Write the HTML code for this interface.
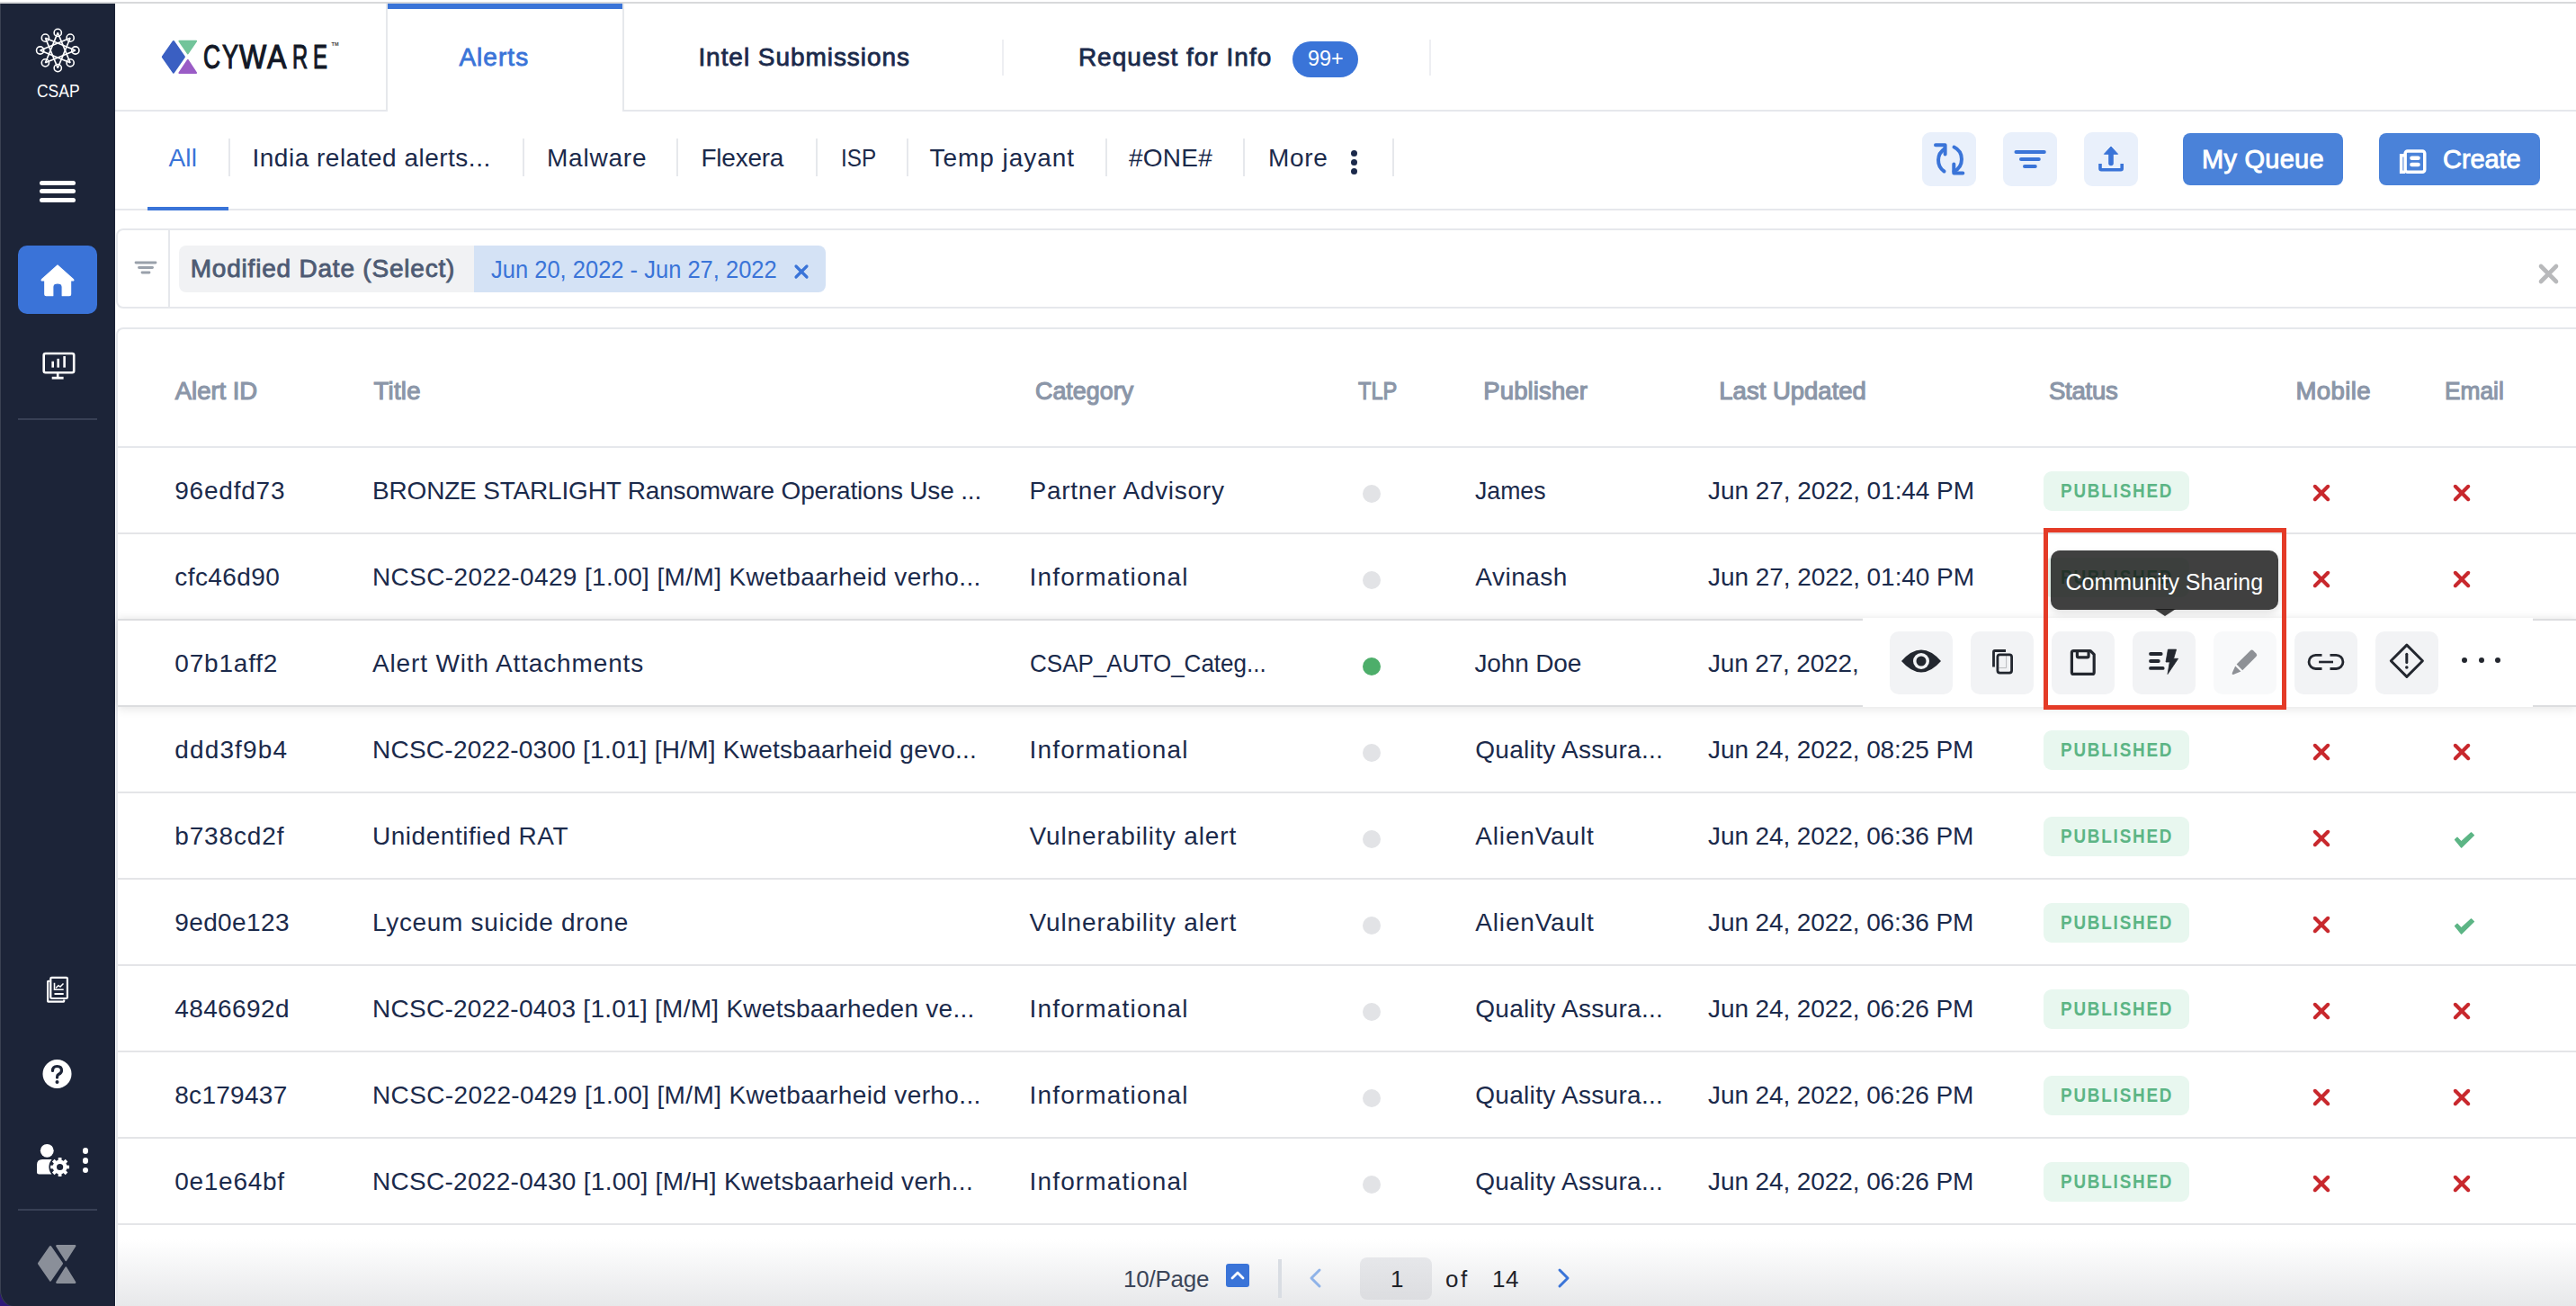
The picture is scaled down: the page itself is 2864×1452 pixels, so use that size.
<!DOCTYPE html>
<html><head><meta charset="utf-8"><style>
html,body{margin:0;padding:0}
body{width:2864px;height:1452px;overflow:hidden;position:relative;background:#fff;font-family:"Liberation Sans",sans-serif}
.t{position:absolute;white-space:nowrap;line-height:1}
svg{overflow:visible}
</style></head><body>
<div style="position:absolute;left:0px;top:2px;width:2864px;height:2px;background:#d8d9db"></div>
<div style="position:absolute;left:0px;top:1430px;width:20px;height:22px;background:#2e1878"></div>
<div style="position:absolute;left:0px;top:4px;width:128px;height:1448px;background:#1c2438;border-bottom-left-radius:14px 18px;box-shadow:inset 1px 0 0 #3a4152"></div>
<svg style="position:absolute;left:20px;top:30px" width="90" height="54" viewBox="0 0 90 54"><g stroke="#fff" stroke-width="1.6" fill="none"><line x1="44.25" y1="6.40" x2="58.11" y2="39.86" /><line x1="58.11" y1="12.14" x2="44.25" y2="45.60" /><line x1="63.85" y1="26.00" x2="30.39" y2="39.86" /><line x1="58.11" y1="39.86" x2="24.65" y2="26.00" /><line x1="44.25" y1="45.60" x2="30.39" y2="12.14" /><line x1="30.39" y1="39.86" x2="44.25" y2="6.40" /><line x1="24.65" y1="26.00" x2="58.11" y2="12.14" /><line x1="30.39" y1="12.14" x2="63.85" y2="26.00" /><circle cx="44.25" cy="6.40" r="4.1" fill="none"/><circle cx="58.11" cy="12.14" r="4.1" fill="none"/><circle cx="63.85" cy="26.00" r="4.1" fill="none"/><circle cx="58.11" cy="39.86" r="4.1" fill="none"/><circle cx="44.25" cy="45.60" r="4.1" fill="none"/><circle cx="30.39" cy="39.86" r="4.1" fill="none"/><circle cx="24.65" cy="26.00" r="4.1" fill="none"/><circle cx="30.39" cy="12.14" r="4.1" fill="none"/></g></svg>
<div class="t" style="left:41.0px;top:90.8px;font-size:20px;color:#fff;font-weight:400;letter-spacing:0px;transform:scaleX(0.8741);transform-origin:0 0;">CSAP</div>
<div style="position:absolute;left:44px;top:200.5px;width:40px;height:5px;background:#fff;border-radius:3px"></div>
<div style="position:absolute;left:44px;top:210.2px;width:40px;height:5px;background:#fff;border-radius:3px"></div>
<div style="position:absolute;left:44px;top:220.0px;width:40px;height:5px;background:#fff;border-radius:3px"></div>
<div style="position:absolute;left:20px;top:273px;width:88px;height:76px;background:#3a73d8;border-radius:10px"></div>
<svg style="position:absolute;left:44px;top:293px" width="40" height="38" viewBox="0 0 40 38"><path d="M20 2 L37.6 17.8 Q38.4 19 37 19 L34.6 19 L34.6 34.2 Q34.6 35.7 33.1 35.7 L25.2 35.7 L25.2 26 Q25.2 22 20 22 Q14.8 22 14.8 26 L14.8 35.7 L7.3 35.7 Q5.8 35.7 5.8 34.2 L5.8 19 L3 19 Q1.6 19 2.4 17.8 Z" fill="#fff" stroke="#fff" stroke-width="1.2" stroke-linejoin="round"/></svg>
<svg style="position:absolute;left:45px;top:390px" width="40" height="34" viewBox="0 0 40 34"><g fill="none" stroke="#fff" stroke-width="2.6"><rect x="3.7" y="3" width="33.5" height="21.3" rx="2"/><line x1="19.2" y1="24.3" x2="19.2" y2="30"/><line x1="12.7" y1="30.2" x2="25.6" y2="30.2" stroke-width="2.8"/></g><g stroke="#fff" stroke-width="2.6"><line x1="13.7" y1="18.6" x2="13.7" y2="11.7"/><line x1="19.7" y1="18.6" x2="19.7" y2="8.8"/><line x1="26.6" y1="18.6" x2="26.6" y2="6"/></g></svg>
<div style="position:absolute;left:20px;top:465px;width:88px;height:2px;background:#384055"></div>
<svg style="position:absolute;left:48px;top:1083px" width="32" height="36" viewBox="0 0 32 36"><g fill="none" stroke="#fff" stroke-width="2.2"><path d="M7.3 7.8 L5.6 7.8 Q5.1 7.8 5.1 8.3 L5.1 30.1 Q5.1 30.6 5.6 30.6 L22.7 30.6 Q23.2 30.6 23.2 30.1 L23.2 28.6"/><rect x="8.3" y="3.8" width="18.6" height="23.2" rx="1.2" fill="#1c2438"/><path d="M12.5 9.7 L12.5 17.2 L22.7 17.2" stroke-width="1.6"/><path d="M14 15.5 L17 12.6 L19 14 L22.5 10.5" stroke-width="1.5"/><line x1="12.5" y1="22" x2="22.7" y2="22" stroke-width="2"/></g></svg>
<svg style="position:absolute;left:46px;top:1177px" width="36" height="34" viewBox="0 0 36 34"><circle cx="17.5" cy="17" r="16" fill="#fff"/><path d="M12.5 13.5 Q12.5 8.5 17.5 8.5 Q22.5 8.5 22.5 13 Q22.5 16 19 17.5 Q17.5 18.3 17.5 21" fill="none" stroke="#1c2438" stroke-width="3.2" stroke-linecap="round"/><circle cx="17.5" cy="26" r="2" fill="#1c2438"/></svg>
<svg style="position:absolute;left:38px;top:1270px" width="44" height="40" viewBox="0 0 44 40"><circle cx="14.3" cy="9.3" r="7.4" fill="#fff"/><path d="M3 35.5 L3 25 Q3 19 9 19 L19.6 19 L19.6 35.5 L5.5 35.5 Q3 35.5 3 33 Z" fill="#fff"/><circle cx="28.6" cy="27.5" r="12.2" fill="#1c2438"/><path d="M35.92 25.47 L39.04 25.68 L39.04 29.32 L35.92 29.53 L35.21 31.25 L37.27 33.60 L34.70 36.17 L32.35 34.11 L30.63 34.82 L30.42 37.94 L26.78 37.94 L26.57 34.82 L24.85 34.11 L22.50 36.17 L19.93 33.60 L21.99 31.25 L21.28 29.53 L18.16 29.32 L18.16 25.68 L21.28 25.47 L21.99 23.75 L19.93 21.40 L22.50 18.83 L24.85 20.89 L26.57 20.18 L26.78 17.06 L30.42 17.06 L30.63 20.18 L32.35 20.89 L34.70 18.83 L37.27 21.40 L35.21 23.75 Z" fill="#fff"/><circle cx="28.6" cy="27.5" r="7.8" fill="#fff"/><circle cx="28.6" cy="27.5" r="3.6" fill="#1c2438"/></svg>
<div style="position:absolute;left:91.5px;top:1276.3px;width:6.5px;height:6.5px;background:#fff;border-radius:50%"></div>
<div style="position:absolute;left:91.5px;top:1287px;width:6.5px;height:6.5px;background:#fff;border-radius:50%"></div>
<div style="position:absolute;left:91.5px;top:1297.7px;width:6.5px;height:6.5px;background:#fff;border-radius:50%"></div>
<div style="position:absolute;left:20px;top:1344px;width:88px;height:2px;background:#384055"></div>
<svg style="position:absolute;left:40px;top:1383px" width="46" height="46" viewBox="0 0 46 46"><g fill="#8a8f99" stroke="#8a8f99" stroke-linejoin="round"><path d="M3.2 21.8 L16 3.2 L28.8 21.8 L16 40.4 Z" stroke-width="2.4"/><path d="M23.2 2.2 L43.3 2.2 L33.3 18 Z" stroke-width="2.2"/><path d="M33.3 26.5 L43.3 42.8 L23.2 42.8 Z" stroke-width="2.2"/></g></svg>
<div style="position:absolute;left:128px;top:122px;width:301px;height:2px;background:#e6e8ec"></div>
<div style="position:absolute;left:429px;top:4px;width:2px;height:120px;background:#e6e8ec"></div>
<div style="position:absolute;left:692px;top:4px;width:2px;height:120px;background:#e6e8ec"></div>
<div style="position:absolute;left:431px;top:4px;width:261px;height:6px;background:#3a74d8"></div>
<div style="position:absolute;left:694px;top:122px;width:2170px;height:2px;background:#e6e8ec"></div>
<div style="position:absolute;left:1114px;top:44px;width:2px;height:40px;background:#eeeff2"></div>
<div style="position:absolute;left:1589px;top:44px;width:2px;height:40px;background:#eeeff2"></div>
<svg style="position:absolute;left:178px;top:43px" width="44" height="42" viewBox="0 0 44 42"><path d="M3 20.3 L14.9 3.2 L26.7 20.3 L14.9 37.4 Z" fill="#3a5fc2" stroke="#3a5fc2" stroke-width="2.4" stroke-linejoin="round"/><path d="M21.3 2.75 L40.2 2.75 L30.8 16.6 Z" fill="#72c49a" stroke="#72c49a" stroke-width="1.8" stroke-linejoin="round"/><path d="M30.8 23.8 L40.2 38 L21.3 38 Z" fill="#9a5cc6" stroke="#9a5cc6" stroke-width="1.8" stroke-linejoin="round"/></svg>
<div class="t" style="left:226.4px;top:45.0px;font-size:37px;color:#121826;font-weight:400;letter-spacing:0px;-webkit-text-stroke:1.2px #121826;transform:scaleX(0.7093);transform-origin:0 0;">C</div>
<div class="t" style="left:246.5px;top:45.0px;font-size:37px;color:#121826;font-weight:400;letter-spacing:0px;-webkit-text-stroke:1.2px #121826;transform:scaleX(0.7300);transform-origin:0 0;">Y</div>
<div class="t" style="left:265.7px;top:45.0px;font-size:37px;color:#121826;font-weight:400;letter-spacing:0px;-webkit-text-stroke:1.2px #121826;transform:scaleX(0.8643);transform-origin:0 0;">W</div>
<div class="t" style="left:297.2px;top:45.0px;font-size:37px;color:#121826;font-weight:400;letter-spacing:0px;-webkit-text-stroke:1.2px #121826;transform:scaleX(0.8700);transform-origin:0 0;">A</div>
<div class="t" style="left:324.6px;top:45.0px;font-size:37px;color:#121826;font-weight:400;letter-spacing:0px;-webkit-text-stroke:1.2px #121826;transform:scaleX(0.6426);transform-origin:0 0;">R</div>
<div class="t" style="left:348.1px;top:45.0px;font-size:37px;color:#121826;font-weight:400;letter-spacing:0px;-webkit-text-stroke:1.2px #121826;transform:scaleX(0.6460);transform-origin:0 0;">E</div>
<div class="t" style="left:368.5px;top:46.8px;font-size:5.5px;color:#444;font-weight:700;letter-spacing:0.2px;">TM</div>
<div class="t" style="left:510.4px;top:50.1px;font-size:28px;color:#3a74d8;font-weight:400;letter-spacing:1.04px;-webkit-text-stroke:0.8px #3a74d8;">Alerts</div>
<div class="t" style="left:776.4px;top:50.1px;font-size:28px;color:#1b2a4b;font-weight:400;letter-spacing:0.95px;-webkit-text-stroke:0.8px #1b2a4b;">Intel Submissions</div>
<div class="t" style="left:1198.9px;top:50.1px;font-size:28px;color:#1b2a4b;font-weight:400;letter-spacing:1.013px;-webkit-text-stroke:0.8px #1b2a4b;">Request for Info</div>
<div style="position:absolute;left:1437px;top:46px;width:73px;height:40px;background:#3a74d8;border-radius:20px"></div>
<div class="t" style="left:1453.5px;top:53.4px;font-size:24px;color:#fff;font-weight:400;letter-spacing:0px;transform:scaleX(0.9756);transform-origin:0 0;">99+</div>
<div style="position:absolute;left:128px;top:232px;width:2736px;height:2px;background:#e6e8ec"></div>
<div style="position:absolute;left:164px;top:230px;width:90px;height:4px;background:#3a74d8"></div>
<div style="position:absolute;left:254px;top:154px;width:2px;height:42px;background:#e6e8ec"></div>
<div style="position:absolute;left:581px;top:154px;width:2px;height:42px;background:#e6e8ec"></div>
<div style="position:absolute;left:752px;top:154px;width:2px;height:42px;background:#e6e8ec"></div>
<div style="position:absolute;left:907px;top:154px;width:2px;height:42px;background:#e6e8ec"></div>
<div style="position:absolute;left:1008px;top:154px;width:2px;height:42px;background:#e6e8ec"></div>
<div style="position:absolute;left:1229px;top:154px;width:2px;height:42px;background:#e6e8ec"></div>
<div style="position:absolute;left:1382px;top:154px;width:2px;height:42px;background:#e6e8ec"></div>
<div style="position:absolute;left:1548px;top:154px;width:2px;height:42px;background:#e6e8ec"></div>
<div class="t" style="left:187.5px;top:162.3px;font-size:28px;color:#3a74d8;font-weight:400;letter-spacing:0.125px;">All</div>
<div class="t" style="left:280.5px;top:162.3px;font-size:28px;color:#1b2a4b;font-weight:400;letter-spacing:0.5px;">India related alerts...</div>
<div class="t" style="left:608px;top:162.3px;font-size:28px;color:#1b2a4b;font-weight:400;letter-spacing:0.792px;">Malware</div>
<div class="t" style="left:779.5px;top:162.3px;font-size:28px;color:#1b2a4b;font-weight:400;letter-spacing:-0.25px;">Flexera</div>
<div class="t" style="left:934.5px;top:162.3px;font-size:28px;color:#1b2a4b;font-weight:400;letter-spacing:0px;transform:scaleX(0.8667);transform-origin:0 0;">ISP</div>
<div class="t" style="left:1033.5px;top:162.3px;font-size:28px;color:#1b2a4b;font-weight:400;letter-spacing:0.95px;">Temp jayant</div>
<div class="t" style="left:1255px;top:162.3px;font-size:28px;color:#1b2a4b;font-weight:400;letter-spacing:0.25px;">#ONE#</div>
<div class="t" style="left:1410px;top:162.3px;font-size:28px;color:#1b2a4b;font-weight:400;letter-spacing:0.667px;">More</div>
<div style="position:absolute;left:1502px;top:166.5px;width:7px;height:7px;background:#1b2a4b;border-radius:50%"></div>
<div style="position:absolute;left:1502px;top:176.5px;width:7px;height:7px;background:#1b2a4b;border-radius:50%"></div>
<div style="position:absolute;left:1502px;top:186.5px;width:7px;height:7px;background:#1b2a4b;border-radius:50%"></div>
<div style="position:absolute;left:2137px;top:147px;width:60px;height:60px;background:#e9f0fb;border-radius:9px"></div>
<div style="position:absolute;left:2227px;top:147px;width:60px;height:60px;background:#e9f0fb;border-radius:9px"></div>
<div style="position:absolute;left:2317px;top:147px;width:60px;height:60px;background:#e9f0fb;border-radius:9px"></div>
<svg style="position:absolute;left:2137px;top:147px" width="60" height="60" viewBox="0 0 60 60"><g fill="none" stroke="#3a74d8" stroke-width="4" stroke-linecap="round" stroke-linejoin="round"><path d="M25 18.5 A15 15 0 0 0 24.5 43.5"/><path d="M35.5 16.5 A15 15 0 0 1 35.5 43.5"/><path d="M15 14.3 L25.6 14.3 L25.6 24.5"/><path d="M35.3 35.5 L35.3 45.5 L45.3 45.5"/></g></svg>
<svg style="position:absolute;left:2227px;top:147px" width="60" height="60" viewBox="0 0 60 60"><g stroke="#3a74d8" stroke-width="4" stroke-linecap="round"><line x1="14.5" y1="22" x2="45.8" y2="22"/><line x1="20" y1="30" x2="39.8" y2="30"/><line x1="24" y1="38" x2="35.8" y2="38"/></g></svg>
<svg style="position:absolute;left:2317px;top:147px" width="60" height="60" viewBox="0 0 60 60"><path d="M30 16 L37.6 24.3 L22.4 24.3 Z" fill="#3a74d8" stroke="#3a74d8" stroke-width="1" stroke-linejoin="round"/><path d="M30 23 L30 34.5" stroke="#3a74d8" stroke-width="5.6" stroke-linecap="round"/><path d="M18 35 L18 40.5 Q18 41.7 19.2 41.7 L41 41.7 Q42.2 41.7 42.2 40.5 L42.2 35" fill="none" stroke="#3a74d8" stroke-width="3.6"/></svg>
<div style="position:absolute;left:2427px;top:148px;width:178px;height:58px;background:#4a82d9;border-radius:8px"></div>
<div class="t" style="left:2448.1px;top:163.3px;font-size:29px;color:#fff;font-weight:400;letter-spacing:0.243px;-webkit-text-stroke:0.9px #fff;">My Queue</div>
<div style="position:absolute;left:2645px;top:148px;width:179px;height:58px;background:#4a82d9;border-radius:8px"></div>
<svg style="position:absolute;left:2665px;top:163px" width="34" height="32" viewBox="0 0 34 32"><g fill="none" stroke="#fff" stroke-width="3.5"><rect x="9.15" y="4.95" width="21.6" height="23.3" rx="2.5"/><path d="M9 9.75 L4.65 9.75 L4.65 28.25 L9 28.25"/></g><g stroke="#fff" stroke-width="4.6" stroke-linecap="round"><line x1="16.5" y1="12.75" x2="23.5" y2="12.75"/><line x1="16.5" y1="19.95" x2="23.5" y2="19.95"/></g></svg>
<div class="t" style="left:2716px;top:163.3px;font-size:29px;color:#fff;font-weight:400;letter-spacing:-0.06px;-webkit-text-stroke:0.9px #fff;">Create</div>
<div style="position:absolute;left:129px;top:254px;width:2760px;height:89px;border:2px solid #e6e8ec;border-radius:8px;box-sizing:border-box"></div>
<div style="position:absolute;left:187px;top:256px;width:2px;height:85px;background:#e6e8ec"></div>
<svg style="position:absolute;left:148px;top:288px" width="28" height="20" viewBox="0 0 28 20"><g stroke="#9aa1ab" stroke-width="2.8" stroke-linecap="round"><line x1="3" y1="4" x2="25" y2="4"/><line x1="6.5" y1="9.5" x2="21.5" y2="9.5"/><line x1="10" y1="15" x2="18" y2="15"/></g></svg>
<div style="position:absolute;left:199px;top:273px;width:328px;height:52px;background:#f1f2f4;border-radius:8px 0 0 8px"></div>
<div class="t" style="left:211.7px;top:285.1px;font-size:28px;color:#4e5b73;font-weight:400;letter-spacing:0.795px;-webkit-text-stroke:0.85px #4e5b73;">Modified Date (Select)</div>
<div style="position:absolute;left:527px;top:273px;width:391px;height:52px;background:#d4e2f5;border-radius:0 8px 8px 0"></div>
<div class="t" style="left:545.75px;top:286.7px;font-size:27px;color:#3a74d8;font-weight:400;letter-spacing:0px;transform:scaleX(0.9449);transform-origin:0 0;">Jun 20, 2022 - Jun 27, 2022</div>
<svg style="position:absolute;left:880.5px;top:291.5px" width="20" height="20" viewBox="0 0 20 20"><g stroke="#3a74d8" stroke-width="3.2" stroke-linecap="round"><line x1="4" y1="4" x2="16" y2="16"/><line x1="16" y1="4" x2="4" y2="16"/></g></svg>
<svg style="position:absolute;left:2821px;top:292px" width="26" height="26" viewBox="0 0 26 26"><g stroke="#b8b9bb" stroke-width="4.6" stroke-linecap="round"><line x1="4" y1="4" x2="21" y2="21"/><line x1="21" y1="4" x2="4" y2="21"/></g></svg>
<div style="position:absolute;left:129px;top:364px;width:2760px;height:1100px;border-top:2px solid #e6e8ec;border-left:2px solid #e6e8ec;border-radius:8px 0 0 0;box-sizing:border-box"></div>
<div class="t" style="left:194.75px;top:420.8px;font-size:27.5px;color:#8b96a8;font-weight:400;letter-spacing:-0.036px;-webkit-text-stroke:1.15px #8b96a8;">Alert ID</div>
<div class="t" style="left:415.5px;top:420.8px;font-size:27.5px;color:#8b96a8;font-weight:400;letter-spacing:0.25px;-webkit-text-stroke:1.15px #8b96a8;">Title</div>
<div class="t" style="left:1151.25px;top:420.8px;font-size:27.5px;color:#8b96a8;font-weight:400;letter-spacing:0px;-webkit-text-stroke:1.15px #8b96a8;transform:scaleX(0.9777);transform-origin:0 0;">Category</div>
<div class="t" style="left:1510.0px;top:420.8px;font-size:27.5px;color:#8b96a8;font-weight:400;letter-spacing:0px;-webkit-text-stroke:1.15px #8b96a8;transform:scaleX(0.8600);transform-origin:0 0;">TLP</div>
<div class="t" style="left:1649.3px;top:420.8px;font-size:27.5px;color:#8b96a8;font-weight:400;letter-spacing:0.125px;-webkit-text-stroke:1.15px #8b96a8;">Publisher</div>
<div class="t" style="left:1911.3px;top:420.8px;font-size:27.5px;color:#8b96a8;font-weight:400;letter-spacing:0.0px;-webkit-text-stroke:1.15px #8b96a8;">Last Updated</div>
<div class="t" style="left:2277.9px;top:420.8px;font-size:27.5px;color:#8b96a8;font-weight:400;letter-spacing:-0.2px;-webkit-text-stroke:1.15px #8b96a8;">Status</div>
<div class="t" style="left:2552.5px;top:420.8px;font-size:27.5px;color:#8b96a8;font-weight:400;letter-spacing:0.4px;-webkit-text-stroke:1.15px #8b96a8;">Mobile</div>
<div class="t" style="left:2718.2px;top:420.8px;font-size:27.5px;color:#8b96a8;font-weight:400;letter-spacing:0px;-webkit-text-stroke:1.15px #8b96a8;transform:scaleX(0.9565);transform-origin:0 0;">Email</div>
<div style="position:absolute;left:131px;top:496px;width:2733px;height:2px;background:#e6e8ec"></div>
<div class="t" style="left:194.25px;top:532.0px;font-size:28px;color:#1b2a4b;font-weight:400;letter-spacing:0.786px;">96edfd73</div>
<div class="t" style="left:414px;top:532.0px;font-size:28px;color:#1b2a4b;font-weight:400;letter-spacing:-0.178px;">BRONZE STARLIGHT Ransomware Operations Use ...</div>
<div class="t" style="left:1144.5px;top:532.0px;font-size:28px;color:#1b2a4b;font-weight:400;letter-spacing:0.733px;">Partner Advisory</div>
<div style="position:absolute;left:1514.5px;top:538.75px;width:20px;height:20px;background:#e2e3e6;border-radius:50%"></div>
<div class="t" style="left:1639.5px;top:532.0px;font-size:28px;color:#1b2a4b;font-weight:400;letter-spacing:0px;transform:scaleX(0.9512);transform-origin:0 0;">James</div>
<div class="t" style="left:1899px;top:532.0px;font-size:28px;color:#1b2a4b;font-weight:400;letter-spacing:-0.062px;">Jun 27, 2022, 01:44 PM</div>
<div style="position:absolute;left:2272px;top:523.5px;width:162px;height:44.5px;background:#e8f7ef;border-radius:9px"></div>
<div class="t" style="left:2291.2px;top:535.0px;font-size:22.5px;color:#5cb585;font-weight:700;letter-spacing:2.128px;transform:scaleX(0.8400);transform-origin:0 0;">PUBLISHED</div>
<svg style="position:absolute;left:2570px;top:536.6px" width="22" height="22" viewBox="0 0 22 22"><g stroke="#c8282d" stroke-width="4.1" stroke-linecap="round"><line x1="3.8" y1="3.8" x2="18.2" y2="18.2"/><line x1="18.2" y1="3.8" x2="3.8" y2="18.2"/></g></svg>
<svg style="position:absolute;left:2726px;top:536.6px" width="22" height="22" viewBox="0 0 22 22"><g stroke="#c8282d" stroke-width="4.1" stroke-linecap="round"><line x1="3.8" y1="3.8" x2="18.2" y2="18.2"/><line x1="18.2" y1="3.8" x2="3.8" y2="18.2"/></g></svg>
<div style="position:absolute;left:131px;top:592px;width:2733px;height:2px;background:#e4e5e8"></div>
<div class="t" style="left:194.25px;top:628.0px;font-size:28px;color:#1b2a4b;font-weight:400;letter-spacing:0.429px;">cfc46d90</div>
<div class="t" style="left:414px;top:628.0px;font-size:28px;color:#1b2a4b;font-weight:400;letter-spacing:0.375px;">NCSC-2022-0429 [1.00] [M/M] Kwetbaarheid verho...</div>
<div class="t" style="left:1144.5px;top:628.0px;font-size:28px;color:#1b2a4b;font-weight:400;letter-spacing:1.167px;">Informational</div>
<div style="position:absolute;left:1514.5px;top:634.75px;width:20px;height:20px;background:#e2e3e6;border-radius:50%"></div>
<div class="t" style="left:1640.3px;top:628.0px;font-size:28px;color:#1b2a4b;font-weight:400;letter-spacing:0.5px;">Avinash</div>
<div class="t" style="left:1899px;top:628.0px;font-size:28px;color:#1b2a4b;font-weight:400;letter-spacing:-0.062px;">Jun 27, 2022, 01:40 PM</div>
<div style="position:absolute;left:2272px;top:619.5px;width:162px;height:44.5px;background:#e8f7ef;border-radius:9px"></div>
<div class="t" style="left:2291.2px;top:631.0px;font-size:22.5px;color:#5cb585;font-weight:700;letter-spacing:2.128px;transform:scaleX(0.8400);transform-origin:0 0;">PUBLISHED</div>
<svg style="position:absolute;left:2570px;top:632.6px" width="22" height="22" viewBox="0 0 22 22"><g stroke="#c8282d" stroke-width="4.1" stroke-linecap="round"><line x1="3.8" y1="3.8" x2="18.2" y2="18.2"/><line x1="18.2" y1="3.8" x2="3.8" y2="18.2"/></g></svg>
<svg style="position:absolute;left:2726px;top:632.6px" width="22" height="22" viewBox="0 0 22 22"><g stroke="#c8282d" stroke-width="4.1" stroke-linecap="round"><line x1="3.8" y1="3.8" x2="18.2" y2="18.2"/><line x1="18.2" y1="3.8" x2="3.8" y2="18.2"/></g></svg>
<div style="position:absolute;left:131px;top:688px;width:2733px;height:2px;background:#dcdddf"></div>
<div style="position:absolute;left:131px;top:688px;width:2733px;height:97px;background:#fff;box-shadow:0 4px 10px rgba(0,0,0,0.09), 0 -3px 8px rgba(0,0,0,0.05)"></div>
<div style="position:absolute;left:131px;top:688px;width:2733px;height:2px;background:#dcdddf"></div>
<div class="t" style="left:194.25px;top:724.0px;font-size:28px;color:#1b2a4b;font-weight:400;letter-spacing:0.814px;">07b1aff2</div>
<div class="t" style="left:414px;top:724.0px;font-size:28px;color:#1b2a4b;font-weight:400;letter-spacing:0.857px;">Alert With Attachments</div>
<div class="t" style="left:1144.5px;top:724.0px;font-size:28px;color:#1b2a4b;font-weight:400;letter-spacing:0px;transform:scaleX(0.9293);transform-origin:0 0;">CSAP_AUTO_Categ...</div>
<div style="position:absolute;left:1514.5px;top:730.75px;width:20px;height:20px;background:#4dae6a;border-radius:50%"></div>
<div class="t" style="left:1639.5px;top:724.0px;font-size:28px;color:#1b2a4b;font-weight:400;letter-spacing:-0.143px;">John Doe</div>
<div class="t" style="left:1899px;top:724.0px;font-size:28px;color:#1b2a4b;font-weight:400;letter-spacing:-0.167px;">Jun 27, 2022,</div>
<div style="position:absolute;left:131px;top:784px;width:2733px;height:2px;background:#dcdddf"></div>
<div class="t" style="left:194.25px;top:820.0px;font-size:28px;color:#1b2a4b;font-weight:400;letter-spacing:1.143px;">ddd3f9b4</div>
<div class="t" style="left:414px;top:820.0px;font-size:28px;color:#1b2a4b;font-weight:400;letter-spacing:0.25px;">NCSC-2022-0300 [1.01] [H/M] Kwetsbaarheid gevo...</div>
<div class="t" style="left:1144.5px;top:820.0px;font-size:28px;color:#1b2a4b;font-weight:400;letter-spacing:1.167px;">Informational</div>
<div style="position:absolute;left:1514.5px;top:826.75px;width:20px;height:20px;background:#e2e3e6;border-radius:50%"></div>
<div class="t" style="left:1640.3px;top:820.0px;font-size:28px;color:#1b2a4b;font-weight:400;letter-spacing:0.294px;">Quality Assura...</div>
<div class="t" style="left:1899px;top:820.0px;font-size:28px;color:#1b2a4b;font-weight:400;letter-spacing:-0.095px;">Jun 24, 2022, 08:25 PM</div>
<div style="position:absolute;left:2272px;top:811.5px;width:162px;height:44.5px;background:#e8f7ef;border-radius:9px"></div>
<div class="t" style="left:2291.2px;top:823.0px;font-size:22.5px;color:#5cb585;font-weight:700;letter-spacing:2.128px;transform:scaleX(0.8400);transform-origin:0 0;">PUBLISHED</div>
<svg style="position:absolute;left:2570px;top:824.6px" width="22" height="22" viewBox="0 0 22 22"><g stroke="#c8282d" stroke-width="4.1" stroke-linecap="round"><line x1="3.8" y1="3.8" x2="18.2" y2="18.2"/><line x1="18.2" y1="3.8" x2="3.8" y2="18.2"/></g></svg>
<svg style="position:absolute;left:2726px;top:824.6px" width="22" height="22" viewBox="0 0 22 22"><g stroke="#c8282d" stroke-width="4.1" stroke-linecap="round"><line x1="3.8" y1="3.8" x2="18.2" y2="18.2"/><line x1="18.2" y1="3.8" x2="3.8" y2="18.2"/></g></svg>
<div style="position:absolute;left:131px;top:880px;width:2733px;height:2px;background:#e4e5e8"></div>
<div class="t" style="left:194.25px;top:916.0px;font-size:28px;color:#1b2a4b;font-weight:400;letter-spacing:0.857px;">b738cd2f</div>
<div class="t" style="left:414px;top:916.0px;font-size:28px;color:#1b2a4b;font-weight:400;letter-spacing:0.533px;">Unidentified RAT</div>
<div class="t" style="left:1144.5px;top:916.0px;font-size:28px;color:#1b2a4b;font-weight:400;letter-spacing:0.889px;">Vulnerability alert</div>
<div style="position:absolute;left:1514.5px;top:922.75px;width:20px;height:20px;background:#e2e3e6;border-radius:50%"></div>
<div class="t" style="left:1640.3px;top:916.0px;font-size:28px;color:#1b2a4b;font-weight:400;letter-spacing:0.822px;">AlienVault</div>
<div class="t" style="left:1899px;top:916.0px;font-size:28px;color:#1b2a4b;font-weight:400;letter-spacing:-0.095px;">Jun 24, 2022, 06:36 PM</div>
<div style="position:absolute;left:2272px;top:907.5px;width:162px;height:44.5px;background:#e8f7ef;border-radius:9px"></div>
<div class="t" style="left:2291.2px;top:919.0px;font-size:22.5px;color:#5cb585;font-weight:700;letter-spacing:2.128px;transform:scaleX(0.8400);transform-origin:0 0;">PUBLISHED</div>
<svg style="position:absolute;left:2570px;top:920.6px" width="22" height="22" viewBox="0 0 22 22"><g stroke="#c8282d" stroke-width="4.1" stroke-linecap="round"><line x1="3.8" y1="3.8" x2="18.2" y2="18.2"/><line x1="18.2" y1="3.8" x2="3.8" y2="18.2"/></g></svg>
<svg style="position:absolute;left:2727px;top:923.5px" width="26" height="20" viewBox="0 0 26 20"><path d="M2.5 9.5 L5 7.2 L9.5 11.8 L20.5 1.8 L23.5 4.6 L9.5 18.2 Z" fill="#5cb585" stroke="#5cb585" stroke-width="1.2" stroke-linejoin="round"/></svg>
<div style="position:absolute;left:131px;top:976px;width:2733px;height:2px;background:#e4e5e8"></div>
<div class="t" style="left:194.25px;top:1012.0px;font-size:28px;color:#1b2a4b;font-weight:400;letter-spacing:0.386px;">9ed0e123</div>
<div class="t" style="left:414px;top:1012.0px;font-size:28px;color:#1b2a4b;font-weight:400;letter-spacing:0.684px;">Lyceum suicide drone</div>
<div class="t" style="left:1144.5px;top:1012.0px;font-size:28px;color:#1b2a4b;font-weight:400;letter-spacing:0.889px;">Vulnerability alert</div>
<div style="position:absolute;left:1514.5px;top:1018.75px;width:20px;height:20px;background:#e2e3e6;border-radius:50%"></div>
<div class="t" style="left:1640.3px;top:1012.0px;font-size:28px;color:#1b2a4b;font-weight:400;letter-spacing:0.822px;">AlienVault</div>
<div class="t" style="left:1899px;top:1012.0px;font-size:28px;color:#1b2a4b;font-weight:400;letter-spacing:-0.095px;">Jun 24, 2022, 06:36 PM</div>
<div style="position:absolute;left:2272px;top:1003.5px;width:162px;height:44.5px;background:#e8f7ef;border-radius:9px"></div>
<div class="t" style="left:2291.2px;top:1015.0px;font-size:22.5px;color:#5cb585;font-weight:700;letter-spacing:2.128px;transform:scaleX(0.8400);transform-origin:0 0;">PUBLISHED</div>
<svg style="position:absolute;left:2570px;top:1016.5999999999999px" width="22" height="22" viewBox="0 0 22 22"><g stroke="#c8282d" stroke-width="4.1" stroke-linecap="round"><line x1="3.8" y1="3.8" x2="18.2" y2="18.2"/><line x1="18.2" y1="3.8" x2="3.8" y2="18.2"/></g></svg>
<svg style="position:absolute;left:2727px;top:1019.5px" width="26" height="20" viewBox="0 0 26 20"><path d="M2.5 9.5 L5 7.2 L9.5 11.8 L20.5 1.8 L23.5 4.6 L9.5 18.2 Z" fill="#5cb585" stroke="#5cb585" stroke-width="1.2" stroke-linejoin="round"/></svg>
<div style="position:absolute;left:131px;top:1072px;width:2733px;height:2px;background:#e4e5e8"></div>
<div class="t" style="left:194.25px;top:1108.0px;font-size:28px;color:#1b2a4b;font-weight:400;letter-spacing:0.386px;">4846692d</div>
<div class="t" style="left:414px;top:1108.0px;font-size:28px;color:#1b2a4b;font-weight:400;letter-spacing:0.266px;">NCSC-2022-0403 [1.01] [M/M] Kwetsbaarheden ve...</div>
<div class="t" style="left:1144.5px;top:1108.0px;font-size:28px;color:#1b2a4b;font-weight:400;letter-spacing:1.167px;">Informational</div>
<div style="position:absolute;left:1514.5px;top:1114.75px;width:20px;height:20px;background:#e2e3e6;border-radius:50%"></div>
<div class="t" style="left:1640.3px;top:1108.0px;font-size:28px;color:#1b2a4b;font-weight:400;letter-spacing:0.294px;">Quality Assura...</div>
<div class="t" style="left:1899px;top:1108.0px;font-size:28px;color:#1b2a4b;font-weight:400;letter-spacing:-0.095px;">Jun 24, 2022, 06:26 PM</div>
<div style="position:absolute;left:2272px;top:1099.5px;width:162px;height:44.5px;background:#e8f7ef;border-radius:9px"></div>
<div class="t" style="left:2291.2px;top:1111.0px;font-size:22.5px;color:#5cb585;font-weight:700;letter-spacing:2.128px;transform:scaleX(0.8400);transform-origin:0 0;">PUBLISHED</div>
<svg style="position:absolute;left:2570px;top:1112.6px" width="22" height="22" viewBox="0 0 22 22"><g stroke="#c8282d" stroke-width="4.1" stroke-linecap="round"><line x1="3.8" y1="3.8" x2="18.2" y2="18.2"/><line x1="18.2" y1="3.8" x2="3.8" y2="18.2"/></g></svg>
<svg style="position:absolute;left:2726px;top:1112.6px" width="22" height="22" viewBox="0 0 22 22"><g stroke="#c8282d" stroke-width="4.1" stroke-linecap="round"><line x1="3.8" y1="3.8" x2="18.2" y2="18.2"/><line x1="18.2" y1="3.8" x2="3.8" y2="18.2"/></g></svg>
<div style="position:absolute;left:131px;top:1168px;width:2733px;height:2px;background:#e4e5e8"></div>
<div class="t" style="left:194.25px;top:1204.0px;font-size:28px;color:#1b2a4b;font-weight:400;letter-spacing:0.286px;">8c179437</div>
<div class="t" style="left:414px;top:1204.0px;font-size:28px;color:#1b2a4b;font-weight:400;letter-spacing:0.375px;">NCSC-2022-0429 [1.00] [M/M] Kwetbaarheid verho...</div>
<div class="t" style="left:1144.5px;top:1204.0px;font-size:28px;color:#1b2a4b;font-weight:400;letter-spacing:1.167px;">Informational</div>
<div style="position:absolute;left:1514.5px;top:1210.75px;width:20px;height:20px;background:#e2e3e6;border-radius:50%"></div>
<div class="t" style="left:1640.3px;top:1204.0px;font-size:28px;color:#1b2a4b;font-weight:400;letter-spacing:0.294px;">Quality Assura...</div>
<div class="t" style="left:1899px;top:1204.0px;font-size:28px;color:#1b2a4b;font-weight:400;letter-spacing:-0.095px;">Jun 24, 2022, 06:26 PM</div>
<div style="position:absolute;left:2272px;top:1195.5px;width:162px;height:44.5px;background:#e8f7ef;border-radius:9px"></div>
<div class="t" style="left:2291.2px;top:1207.0px;font-size:22.5px;color:#5cb585;font-weight:700;letter-spacing:2.128px;transform:scaleX(0.8400);transform-origin:0 0;">PUBLISHED</div>
<svg style="position:absolute;left:2570px;top:1208.6px" width="22" height="22" viewBox="0 0 22 22"><g stroke="#c8282d" stroke-width="4.1" stroke-linecap="round"><line x1="3.8" y1="3.8" x2="18.2" y2="18.2"/><line x1="18.2" y1="3.8" x2="3.8" y2="18.2"/></g></svg>
<svg style="position:absolute;left:2726px;top:1208.6px" width="22" height="22" viewBox="0 0 22 22"><g stroke="#c8282d" stroke-width="4.1" stroke-linecap="round"><line x1="3.8" y1="3.8" x2="18.2" y2="18.2"/><line x1="18.2" y1="3.8" x2="3.8" y2="18.2"/></g></svg>
<div style="position:absolute;left:131px;top:1264px;width:2733px;height:2px;background:#e4e5e8"></div>
<div class="t" style="left:194.25px;top:1300.0px;font-size:28px;color:#1b2a4b;font-weight:400;letter-spacing:0.714px;">0e1e64bf</div>
<div class="t" style="left:414px;top:1300.0px;font-size:28px;color:#1b2a4b;font-weight:400;letter-spacing:0.292px;">NCSC-2022-0430 [1.00] [M/H] Kwetsbaarheid verh...</div>
<div class="t" style="left:1144.5px;top:1300.0px;font-size:28px;color:#1b2a4b;font-weight:400;letter-spacing:1.167px;">Informational</div>
<div style="position:absolute;left:1514.5px;top:1306.75px;width:20px;height:20px;background:#e2e3e6;border-radius:50%"></div>
<div class="t" style="left:1640.3px;top:1300.0px;font-size:28px;color:#1b2a4b;font-weight:400;letter-spacing:0.294px;">Quality Assura...</div>
<div class="t" style="left:1899px;top:1300.0px;font-size:28px;color:#1b2a4b;font-weight:400;letter-spacing:-0.095px;">Jun 24, 2022, 06:26 PM</div>
<div style="position:absolute;left:2272px;top:1291.5px;width:162px;height:44.5px;background:#e8f7ef;border-radius:9px"></div>
<div class="t" style="left:2291.2px;top:1303.0px;font-size:22.5px;color:#5cb585;font-weight:700;letter-spacing:2.128px;transform:scaleX(0.8400);transform-origin:0 0;">PUBLISHED</div>
<svg style="position:absolute;left:2570px;top:1304.6px" width="22" height="22" viewBox="0 0 22 22"><g stroke="#c8282d" stroke-width="4.1" stroke-linecap="round"><line x1="3.8" y1="3.8" x2="18.2" y2="18.2"/><line x1="18.2" y1="3.8" x2="3.8" y2="18.2"/></g></svg>
<svg style="position:absolute;left:2726px;top:1304.6px" width="22" height="22" viewBox="0 0 22 22"><g stroke="#c8282d" stroke-width="4.1" stroke-linecap="round"><line x1="3.8" y1="3.8" x2="18.2" y2="18.2"/><line x1="18.2" y1="3.8" x2="3.8" y2="18.2"/></g></svg>
<div style="position:absolute;left:131px;top:1360px;width:2733px;height:2px;background:#e4e5e8"></div>
<div style="position:absolute;left:2071px;top:687px;width:745px;height:99px;background:#fff"></div>
<div style="position:absolute;left:2101px;top:702px;width:70px;height:70px;background:#f2f3f5;border-radius:10px"></div>
<div style="position:absolute;left:2191px;top:702px;width:70px;height:70px;background:#f2f3f5;border-radius:10px"></div>
<div style="position:absolute;left:2281px;top:702px;width:70px;height:70px;background:#f2f3f5;border-radius:10px"></div>
<div style="position:absolute;left:2371px;top:702px;width:70px;height:70px;background:#f2f3f5;border-radius:10px"></div>
<div style="position:absolute;left:2461px;top:702px;width:70px;height:70px;background:#f8f9fa;border-radius:10px"></div>
<div style="position:absolute;left:2551px;top:702px;width:70px;height:70px;background:#f2f3f5;border-radius:10px"></div>
<div style="position:absolute;left:2641px;top:702px;width:70px;height:70px;background:#f2f3f5;border-radius:10px"></div>
<svg style="position:absolute;left:2101px;top:702px" width="70" height="70" viewBox="0 0 70 70"><path d="M13 33 Q35 8 57 33 Q35 58 13 33 Z" fill="#23272f"/><circle cx="35" cy="33" r="9" fill="#f2f3f5"/><circle cx="35" cy="33" r="5.5" fill="#23272f"/></svg>
<svg style="position:absolute;left:2191px;top:702px" width="70" height="70" viewBox="0 0 70 70"><path d="M31.5 40.6 L39.6 40.6 L39.6 27" fill="none" stroke="#b9bbbe" stroke-width="1"/><g fill="none" stroke="#23272f" stroke-width="2.8"><path d="M25.5 39.6 L25.5 22.9 Q25.5 21.5 26.9 21.5 L39 21.5"/><rect x="29.9" y="25.8" width="15.7" height="20.3" rx="2.5"/></g></svg>
<svg style="position:absolute;left:2281px;top:702px" width="70" height="70" viewBox="0 0 70 70"><g fill="none" stroke="#23272f" stroke-width="3.2" stroke-linejoin="round"><path d="M22.4 23.6 Q22.4 21.6 24.4 21.6 L43.2 21.6 L47.2 25.6 L47.2 45.4 Q47.2 47.4 45.2 47.4 L24.4 47.4 Q22.4 47.4 22.4 45.4 Z"/><path d="M28.4 21.6 L28.4 27.2 Q28.4 28.8 30 28.8 L39.5 28.8 Q41.1 28.8 41.1 27.2 L41.1 21.6"/></g></svg>
<svg style="position:absolute;left:2371px;top:702px" width="70" height="70" viewBox="0 0 70 70"><g stroke="#23272f" stroke-width="3.8" stroke-linecap="round"><line x1="20" y1="25" x2="31.7" y2="25"/><line x1="20" y1="33" x2="28.8" y2="33"/><line x1="20" y1="40.9" x2="33.7" y2="40.9"/></g><path d="M39.4 20.1 L48.6 20.1 L45.6 30.3 L50.6 30.3 L39 47.5 L41.3 34 L37 34 Z" fill="#23272f" stroke="#23272f" stroke-width="0.8" stroke-linejoin="round"/></svg>
<svg style="position:absolute;left:2461px;top:702px" width="70" height="70" viewBox="0 0 70 70"><path d="M40.8 21.4 Q42.6 19.6 44.4 21.4 L47.4 24.4 Q49.2 26.2 47.4 28 L32.2 43.2 L25.6 36.6 Z" fill="#8e9196"/><path d="M24.2 38.4 L30.4 44.6 L22.6 47.8 Q20 48.6 20.8 46 Z" fill="#8e9196"/></svg>
<svg style="position:absolute;left:2551px;top:702px" width="70" height="70" viewBox="0 0 70 70"><g fill="none" stroke="#23272f" stroke-width="2.8"><path d="M30.5 26.4 H23.6 A7.55 7.55 0 0 0 23.6 41.5 H30.5"/><path d="M39.5 26.4 H46.4 A7.55 7.55 0 0 1 46.4 41.5 H39.5"/><line x1="27.1" y1="34" x2="43" y2="34" stroke-width="2.6"/></g></svg>
<svg style="position:absolute;left:2641px;top:702px" width="70" height="70" viewBox="0 0 70 70"><path d="M34.85 15.15 L52.45 32.75 L34.85 50.35 L17.25 32.75 Z" fill="none" stroke="#23272f" stroke-width="2.9" stroke-linejoin="round"/><line x1="34.8" y1="25.2" x2="34.8" y2="34.6" stroke="#23272f" stroke-width="3" stroke-linecap="round"/><circle cx="34.8" cy="40" r="1.8" fill="#23272f"/></svg>
<div style="position:absolute;left:2737px;top:731.3px;width:6px;height:6px;background:#23272f;border-radius:50%"></div>
<div style="position:absolute;left:2755.5px;top:731.3px;width:6px;height:6px;background:#23272f;border-radius:50%"></div>
<div style="position:absolute;left:2774px;top:731.3px;width:6px;height:6px;background:#23272f;border-radius:50%"></div>
<div style="position:absolute;left:2280px;top:612px;width:253px;height:66px;background:rgba(22,22,22,0.82);border-radius:10px;box-shadow:0 4px 10px rgba(0,0,0,0.12)"></div>
<svg style="position:absolute;left:2395px;top:677px" width="24" height="9" viewBox="0 0 24 9"><path d="M0 0 L24 0 L12 8 Z" fill="rgba(22,22,22,0.82)"/></svg>
<div class="t" style="left:2296.5px;top:634.8px;font-size:25px;color:#fff;font-weight:400;letter-spacing:0.0px;">Community Sharing</div>
<div style="position:absolute;left:2272px;top:587px;width:270px;height:202px;border:5px solid #e43b27;box-sizing:border-box"></div>
<div style="position:absolute;left:131px;top:1362px;width:2733px;height:90px;background:linear-gradient(#fff 0%, #fff 18%, #e7e8ea 100%)"></div>
<div class="t" style="left:1249px;top:1409.0px;font-size:26px;color:#3b4558;font-weight:400;letter-spacing:-0.25px;">10/Page</div>
<div style="position:absolute;left:1363px;top:1405px;width:26px;height:26px;background:#3a74d8;border-radius:3px"></div>
<svg style="position:absolute;left:1363px;top:1405px" width="26" height="26" viewBox="0 0 26 26"><path d="M7 16 L13 10 L19 16" fill="none" stroke="#fff" stroke-width="2.8" stroke-linecap="round" stroke-linejoin="round"/></svg>
<div style="position:absolute;left:1421px;top:1400px;width:4px;height:43px;background:#d9dde3"></div>
<svg style="position:absolute;left:1452px;top:1408px" width="20" height="26" viewBox="0 0 20 26"><path d="M15 4 L6 13 L15 22" fill="none" stroke="#8fb3e8" stroke-width="3" stroke-linecap="round" stroke-linejoin="round"/></svg>
<div style="position:absolute;left:1512px;top:1398px;width:80px;height:47px;background:linear-gradient(#e6e7ea,#dcdde0);border-radius:8px"></div>
<div class="t" style="left:1546px;top:1409.0px;font-size:26px;color:#1f2329;font-weight:400;letter-spacing:0px;">1</div>
<div class="t" style="left:1607px;top:1409.0px;font-size:26px;color:#1f2329;font-weight:400;letter-spacing:2.6px;">of</div>
<div class="t" style="left:1659px;top:1409.0px;font-size:26px;color:#1f2329;font-weight:400;letter-spacing:0.6px;">14</div>
<svg style="position:absolute;left:1729px;top:1408px" width="20" height="26" viewBox="0 0 20 26"><path d="M5 4 L14 13 L5 22" fill="none" stroke="#3a74d8" stroke-width="3" stroke-linecap="round" stroke-linejoin="round"/></svg>
</body></html>
